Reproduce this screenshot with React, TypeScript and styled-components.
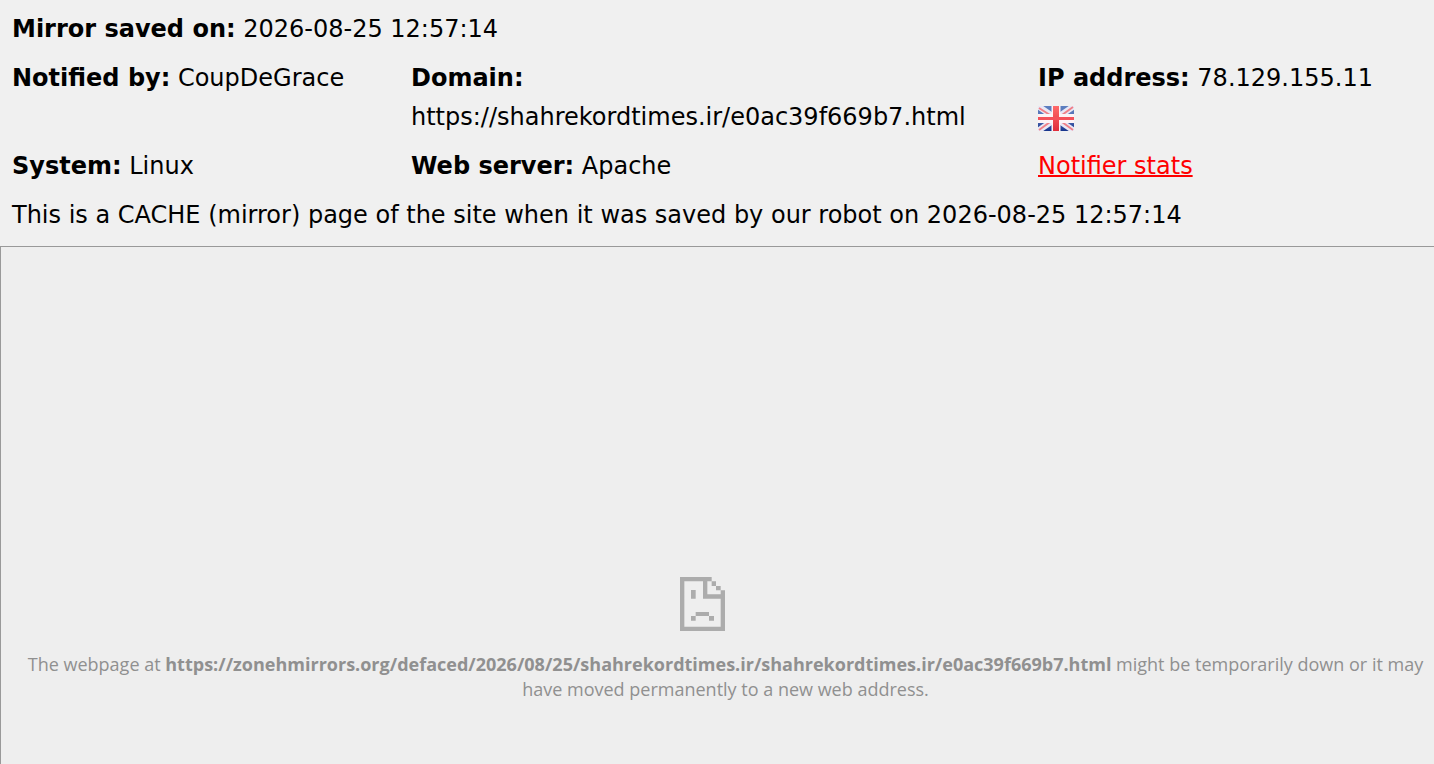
import React from "react";
import styled, { createGlobalStyle } from "styled-components";

const GlobalStyle = createGlobalStyle`
  body {
    margin: 0;
    background: #f0f0f0;
  }
`;

const Page = styled.div`
  display: flex;
  flex-direction: column;
  min-height: 100vh;
  color: #000;
  font-family: Verdana, "DejaVu Sans", sans-serif;
  font-size: 24px;
  line-height: 39px;
`;

const Details = styled.header`
  display: grid;
  grid-template-columns: 399fr 627fr 396fr;
  row-gap: 10px;
  padding: 10px 0 11px 12px;
`;

const Field = styled.div<{ $wide?: boolean }>`
  grid-column: ${(p) => (p.$wide ? "1 / -1" : "auto")};
  min-width: 0;
`;

const Value = styled.div`
  overflow-wrap: anywhere;
`;

const Flag = styled.svg`
  display: block;
  width: 36px;
  height: 25px;
  margin-top: 8px;
`;

const StatsLink = styled.a`
  color: #f00;
  text-decoration: underline;
  text-decoration-thickness: 2px;
`;

const Frame = styled.main`
  flex: 1;
  display: flex;
  flex-direction: column;
  align-items: center;
  justify-content: flex-end;
  box-sizing: border-box;
  padding: 64px 8px 62px 24px;
  border-top: 1px solid #999;
  border-left: 1px solid #999;
  background: #eee;
  color: #909090;
`;

const SadPage = styled.svg`
  width: 45px;
  height: 54px;
  margin: 0 46px 21px 0;
`;

const Message = styled.p`
  margin: 0;
  font-family: "Segoe UI", "Open Sans", sans-serif;
  font-size: 18px;
  line-height: 25px;
  text-align: center;
`;

function BritishFlag() {
  return (
    <Flag viewBox="0 0 36 25" role="img" aria-label="United Kingdom">
      <defs>
        <linearGradient id="flagBlue" x1="0" y1="0" x2="0" y2="1">
          <stop offset="0" stopColor="#5d7fc0" />
          <stop offset="0.5" stopColor="#5570b4" />
          <stop offset="1" stopColor="#16348c" />
        </linearGradient>
        <linearGradient id="flagRed" x1="0" y1="0" x2="0" y2="1">
          <stop offset="0" stopColor="#ff6a6a" />
          <stop offset="1" stopColor="#e02c3a" />
        </linearGradient>
      </defs>
      <rect width="36" height="25" fill="url(#flagBlue)" />
      <path d="M0 0L36 25M36 0L0 25" stroke="#e9e8f5" strokeWidth="6" />
      <path
        d="M1 2L12 9M35 1L24 9M1 24L12 16M35 24L24 16"
        stroke="#f08088"
        strokeWidth="2"
      />
      <path d="M18 0V25M0 12.5H36" stroke="#fdf3f6" strokeWidth="9" />
      <rect x="15" width="6" height="25" fill="url(#flagRed)" />
      <rect y="11" width="36" height="3" fill="#f4505a" />
    </Flag>
  );
}

function SadPageIcon() {
  return (
    <SadPage viewBox="0 0 135 162" fill="#acacac" aria-hidden="true">
      <path
        d="M0 0H95V13H108V27H122V40H135V162H0ZM13 13V149H122V65H69V13ZM82 13V52H122V40H108V27H95V13Z"
        fillRule="evenodd"
      />
      <path d="M33 39H47V65H33ZM47 105H87V117H102V131H87V117H47V131H33V117H47Z" />
    </SadPage>
  );
}

export default function App() {
  return (
    <>
      <GlobalStyle />
      <Page>
        <Details>
          <Field $wide>
            <strong>Mirror saved on:</strong> 2026-08-25 12:57:14
          </Field>
          <Field>
            <strong>Notified by:</strong> CoupDeGrace
          </Field>
          <Field>
            <strong>Domain:</strong>
            <Value>https://shahrekordtimes.ir/e0ac39f669b7.html</Value>
          </Field>
          <Field>
            <strong>IP address:</strong> 78.129.155.11
            <BritishFlag />
          </Field>
          <Field>
            <strong>System:</strong> Linux
          </Field>
          <Field>
            <strong>Web server:</strong> Apache
          </Field>
          <Field>
            <StatsLink href="#stats">Notifier stats</StatsLink>
          </Field>
          <Field $wide>
            This is a CACHE (mirror) page of the site when it was saved by our
            robot on 2026-08-25 12:57:14
          </Field>
        </Details>
        <Frame>
          <SadPageIcon />
          <Message>
            The webpage at{" "}
            <strong>
              https://zonehmirrors.org/defaced/2026/08/25/shahrekordtimes.ir/shahrekordtimes.ir/e0ac39f669b7.html
            </strong>{" "}
            might be temporarily down or it may have moved permanently to a new
            web address.
          </Message>
        </Frame>
      </Page>
    </>
  );
}
